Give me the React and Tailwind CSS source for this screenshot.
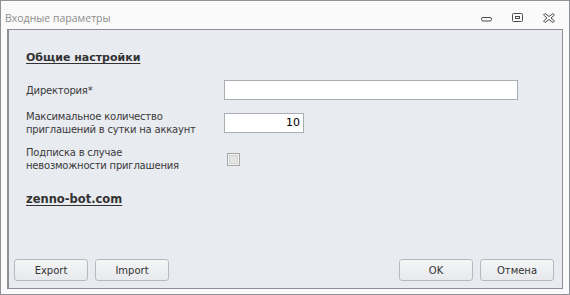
export default function App() {
  return (
    <div className="w-[570px] h-[295px] border border-[#8e9196] bg-[#fafafa] flex flex-col font-['DejaVu_Sans',sans-serif] text-[#3a3a3a] overflow-hidden">
      {/* Title bar */}
      <div className="h-[28px] flex items-start shrink-0">
        <div className="pl-[4px] pt-[10px] text-[10.5px] leading-[14px] text-[#8d8d8d] font-['Open_Sans',sans-serif]">
          Входные параметры
        </div>
        <div className="ml-auto flex gap-[20px] pt-[12px] pr-[14px]">
          <svg width="11" height="9" viewBox="0 0 11 9" fill="none" stroke="#4d4d4d" strokeWidth="1">
            <rect x="0.5" y="4.5" width="10" height="3.5" rx="1.5" />
          </svg>
          <svg width="11" height="9" viewBox="0 0 11 9" fill="none" stroke="#4d4d4d" strokeWidth="1">
            <rect x="0.5" y="0.5" width="10" height="8" rx="1" />
            <rect x="3.5" y="3.5" width="4" height="2" />
          </svg>
          <svg width="12" height="10" viewBox="0 0 12 10" fill="none" stroke="#4d4d4d" strokeWidth="1">
            <path d="M0.5 2 L2 0.5 L6 3.5 L10 0.5 L11.5 2 L8 5 L11.5 8 L10 9.5 L6 6.5 L2 9.5 L0.5 8 L4 5 Z" strokeLinejoin="round" />
          </svg>
        </div>
      </div>

      {/* Content panel */}
      <div className="mx-[6px] h-[260px] shrink-0 border border-l-2 border-[#8c8f94] bg-[#e8ebf0] flex flex-col">
        <div className="pl-[17px] pt-[20px] flex flex-col">
          <div className="h-[16px] leading-[16px] text-[11px] font-bold underline underline-offset-2 text-[#333333]">
            Общие настройки
          </div>

          <div className="mt-[14px] h-[20px] flex items-center">
            <div className="w-[198px] text-[10px] leading-[13px] tracking-[-0.2px]">Директория*</div>
            <div className="w-[294px] h-[20px] border border-[#a9aeb5] bg-white" />
          </div>

          <div className="mt-[9px] h-[28px] flex items-center">
            <div className="w-[198px] text-[10px] leading-[13px] tracking-[-0.2px]">
              Максимальное количество
              <br />
              приглашений в сутки на аккаунт
            </div>
            <div className="w-[80px] h-[20px] border border-[#a9aeb5] bg-white flex items-center justify-end pr-[3px] text-[11px] text-black">
              10
            </div>
          </div>

          <div className="mt-[8px] h-[28px] flex items-center">
            <div className="w-[198px] text-[10px] leading-[13px] tracking-[-0.2px]">
              Подписка в случае
              <br />
              невозможности приглашения
            </div>
            <div className="ml-[3px] w-[13px] h-[13px] border border-[#a6a6a6] bg-[#f2f2f2] p-[1px]">
              <div className="w-full h-full bg-[#e3e3e3] border border-[#d6d6d6]" />
            </div>
          </div>

          <div className="mt-[18px] h-[16px] leading-[16px] text-[11.5px] font-bold underline underline-offset-2 text-[#333333]">
            zenno-bot.com
          </div>
        </div>

        {/* Footer buttons */}
        <div className="mt-auto flex gap-[7px] pl-[5px] pr-[8px] pb-[7px] text-[10px]">
          <button className="w-[74px] h-[22px] rounded-[3px] border border-[#b6babf] bg-linear-to-b from-[#f4f5f7] to-[#e7e9ec] text-[#333333]">
            Export
          </button>
          <button className="w-[74px] h-[22px] rounded-[3px] border border-[#b6babf] bg-linear-to-b from-[#f4f5f7] to-[#e7e9ec] text-[#333333]">
            Import
          </button>
          <button className="ml-auto w-[74px] h-[22px] rounded-[3px] border border-[#b6babf] bg-linear-to-b from-[#f4f5f7] to-[#e7e9ec] text-[#333333]">
            OK
          </button>
          <button className="w-[74px] h-[22px] rounded-[3px] border border-[#b6babf] bg-linear-to-b from-[#f4f5f7] to-[#e7e9ec] text-[#333333]">
            Отмена
          </button>
        </div>
      </div>
    </div>
  )
}
